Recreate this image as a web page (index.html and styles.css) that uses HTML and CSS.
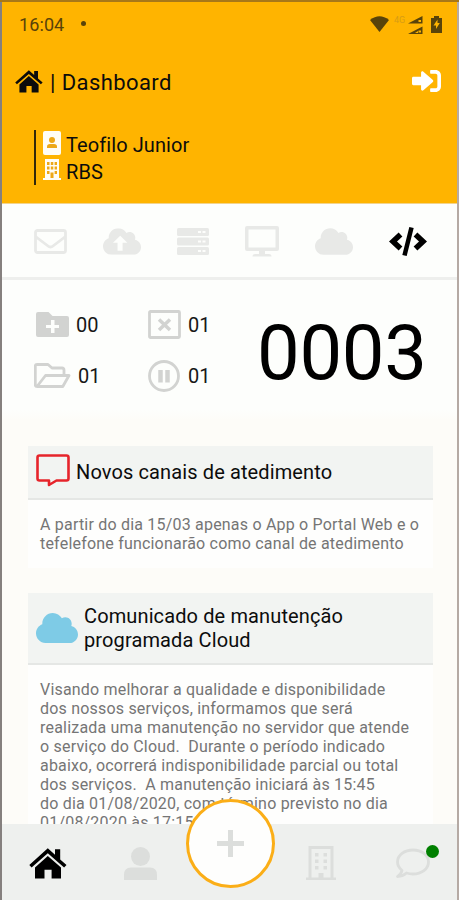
FILE: index.html
```html
<!DOCTYPE html>
<html lang="pt-BR">
<head>
<meta charset="utf-8">
<title>Dashboard</title>
<link rel="stylesheet" href="styles.css">
</head>
<body>
<svg class="defs" width="0" height="0">
  <symbol id="home" viewBox="0 0 38 31"><path d="M18.8 0.3 26 6.7V1.2h5.2v10.200L37.500 17l-2.400 2.400L18.800 5.300 2.600 19.400.300 17z"/><path d="M18.800 8 32 19.500V30.500H22.600V21.700H15.500V30.500H6V19.500z"/></symbol>
  <symbol id="cloud" viewBox="0 32 640 448"><path d="M537.6 226.6c4.1-10.7 6.4-22.4 6.4-34.6 0-53-43-96-96-96-19.700 0-38.100 6-53.300 16.200C367 64.200 315.300 32 256 32c-88.400 0-160 71.600-160 160 0 2.700.1 5.400.2 8.100C40.200 219.800 0 273.200 0 336c0 79.500 64.500 144 144 144h368c70.700 0 128-57.300 128-128 0-61.900-44-113.600-102.400-125.400z"/></symbol>
  <symbol id="building" viewBox="0 0 30 34"><path fill-rule="evenodd" d="M2.500 0h25v31.500H30V34H0v-2.500h2.500zM5.500 3v28.500h7V27h5v4.500h7V3zM9 7h3.500v3.500H9zM17.500 7H21v3.500h-3.500zM9 13.500h3.500V17H9zM17.500 13.500H21V17h-3.500zM9 20h3.500v3.500H9zM17.500 20H21v3.500h-3.500z"/></symbol>
</svg>
<div class="screen">
  <header class="header">
    <div class="status">
      <span class="clock">16:04</span><span class="bullet"></span>
      <svg class="wifi" width="19" height="16" viewBox="0 0 19 16"><path d="M0 4Q9.500-3.500 19 4L9.500 16z"/></svg>
      <span class="net">4G</span>
      <svg class="signal" width="15" height="18" viewBox="0 0 15 18"><path d="M0 7.500 14.500 0v7.500zM0 18l14.500-7.500V18z"/><path class="cut" d="M10.500 4h2.500v2h-2.500zM10.500 14.500h2.500v2h-2.500zM7 17l3-2v2z"/></svg>
      <svg class="battery" width="11" height="17" viewBox="0 0 11 17"><path d="M3 0h5v2h3v15H0V2h3z"/><path class="cut" d="M6.500 3.500 2.500 9.500h2.500V13l3.800-6H6.500z"/></svg>
    </div>
    <div class="titlebar">
      <svg class="logo" width="28" height="23"><use href="#home"/></svg>
      <h1>| <span>Dashboard</span></h1>
      <svg class="signin" width="29" height="22" viewBox="0 64 512 384" preserveAspectRatio="none"><path d="M416 448h-84c-6.600 0-12-5.400-12-12v-40c0-6.600 5.400-12 12-12h84c17.700 0 32-14.300 32-32V160c0-17.700-14.300-32-32-32h-84c-6.600 0-12-5.400-12-12V76c0-6.600 5.400-12 12-12h84c53 0 96 43 96 96v192c0 53-43 96-96 96zm-47-209L201 95c-15-15-41-4.500-41 17v70H24c-13.300 0-24 10.700-24 24v100c0 13.300 10.700 24 24 24h136v70c0 21.500 26 32 41 17l168-144c9.300-9.400 9.300-24.600 0-34z"/></svg>
    </div>
    <div class="profile">
      <div class="who">
        <svg width="18" height="24" viewBox="0 0 18 24"><rect width="18" height="24" rx="2"/><g class="mark"><circle cx="9" cy="9" r="3"/><path d="M4 17v-1.500Q4 13 7 13h4q3 0 3 2.500V17z"/></g></svg>
        <span class="name">Teofilo Junior</span>
      </div>
      <div class="who">
        <svg width="18" height="21" viewBox="0 0 18 21"><path d="M2 0h14v19h2v2H0v-2h2z"/><g class="mark"><path d="M4 3h2.500v3H4zM7.800 3h2.500v3H7.800zM11.600 3h2.400v3h-2.400zM4 7.500h2.500v3H4zM7.800 7.500h2.500v3H7.800zM11.600 7.500h2.400v3h-2.400zM4 12h2.500v3H4zM11.600 12h2.400v3h-2.400zM7.500 13.500h3V19h-3z"/></g></svg>
        <span class="org">RBS</span>
      </div>
    </div>
  </header>

  <nav class="tabs">
    <svg width="33" height="25" viewBox="0 0 33 25" class="line"><rect x="1.500" y="1.500" width="30" height="22" rx="2"/><path d="M1.500 7.500 14 17q2.500 2 5 0L31.500 7.500"/></svg>
    <svg width="38" height="27" viewBox="0 32 640 448"><use href="#cloud" x="0" y="32" width="640" height="448"/><path class="hole" d="M290 160 410 275H330V410H245V275H168z"/></svg>
    <svg width="32" height="27" viewBox="0 0 32 27"><rect width="32" height="8" rx="1.500"/><rect y="9.500" width="32" height="8" rx="1.500"/><rect y="19" width="32" height="8" rx="1.500"/><path class="hole" d="M21 3h3v2h-3zM25.500 3h3v2h-3zM21 12.500h3v2h-3zM25.500 12.500h3v2h-3zM21 22h3v2h-3zM25.500 22h3v2h-3z"/></svg>
    <svg width="34" height="31" viewBox="0 0 34 31"><path fill-rule="evenodd" d="M2 0h30q2 0 2 2v21q0 2-2 2H20v3h4q2.500 0 2.500 2.500h-19Q7.500 28 10 28h4v-3H2q-2 0-2-2V2q0-2 2-2zM3.500 3.500v18h27v-18z"/></svg>
    <svg width="38" height="27"><use href="#cloud"/></svg>
    <svg class="code" width="38" height="31" viewBox="0 0 38 31"><path d="M11.500 8.500 4 15.500 11.500 22.500M26.500 8.500l7.500 7-7.500 7"/><path class="slash" d="M22.500 1.500l-7 28"/></svg>
  </nav>

  <section class="stats">
    <div class="stat a"><svg width="33" height="25" viewBox="0 0 33 25"><path d="M2 0h10.500l4 4H31q2 0 2 2v17q0 2-2 2H2q-2 0-2-2V2q0-2 2-2z"/><path class="hole" d="M15 8h3.500v5H23v3h-4.500v5H15v-5h-5v-3h5z"/></svg><span>00</span></div>
    <div class="stat b"><svg class="line" width="33" height="29" viewBox="0 0 33 29"><rect x="1.500" y="1.500" width="30" height="26" rx="1"/><path class="thick" d="m11 9.500 11 10.500M22 9.500 11 20"/></svg><span>01</span></div>
    <div class="stat c"><svg class="line" width="37" height="25" viewBox="0 0 37 25"><path d="M30 11V7q0-2-2-2H18l-4-3.500H3Q1.300 1.500 1.300 3v19q0 1.500 2 1.500h25.500L35 12.500H11.500L3 23.500"/></svg><span>01</span></div>
    <div class="stat d"><svg class="line" width="32" height="32" viewBox="0 0 32 32"><circle cx="16" cy="16" r="14.500"/><path class="bars" d="M12.500 10v12.500M19.500 10v12.500"/></svg><span>01</span></div>
    <strong class="total">0003</strong>
  </section>

  <main class="feed">
    <article class="card">
      <h2><svg class="bubble" width="34" height="33" viewBox="0 0 34 33"><path d="M3.500 1.500h27q2 0 2 2v21q0 2-2 2H20.500L13 31v-4.500H3.500q-2 0-2-2v-21q0-2 2-2z"/></svg><span class="t1">Novos canais de atedimento</span></h2>
      <p>A partir do dia 15/03 apenas o App o Portal Web e o<br>tefelefone funcionarão como canal de atedimento</p>
    </article>
    <article class="card two">
      <h2><svg class="sky" width="42" height="30" viewBox="0 32 640 448" preserveAspectRatio="none"><use href="#cloud" x="0" y="32" width="640" height="448"/></svg><span class="t2">Comunicado de manutenção<br>programada Cloud</span></h2>
      <p>Visando melhorar a qualidade e disponibilidade<br>dos nossos serviços, informamos que será<br>realizada uma manutenção no servidor que atende<br>o serviço do Cloud.&nbsp; Durante o período indicado<br>abaixo, ocorrerá indisponibilidade parcial ou total<br>dos serviços.&nbsp; A manutenção iniciará às 15:45<br>do dia 01/08/2020, com término previsto no dia<br>01/08/2020 às 17:15</p>
    </article>
  </main>

  <nav class="bottom">
    <svg class="active" width="38" height="31"><use href="#home"/></svg>
    <svg width="33" height="33" viewBox="0 0 33 33"><circle cx="16.500" cy="9.500" r="9.500"/><path d="M0 33V28Q0 20.500 7 20.500H26q7 0 7 7.500v5z"/></svg>
    <button class="fab" aria-label="Novo"><svg width="29" height="29" viewBox="0 0 29 29"><path d="M12 1h5v11h11v5H17v11h-5V17H1v-5h11z"/></svg></button>
    <svg width="30" height="34"><use href="#building"/></svg>
    <span class="chat"><svg class="line" width="34" height="31" viewBox="0 0 34 31"><path d="M6 22.500Q1.500 18.500 1.500 14C1.500 7 8.500 2 17 2s15.500 5 15.500 12S25.500 26 17 26q-3.500 0-6.500-1Q6.500 28.500 1.500 28.500 5.500 25.500 6 22.500z"/></svg><i class="dot"></i></span>
  </nav>
</div>
</body>
</html>
```
FILE: styles.css
```css
* { box-sizing: border-box; margin: 0; padding: 0; }
body {
  width: 459px;
  height: 900px;
  overflow: hidden;
  padding: 2px 2px 0;
  background: linear-gradient(#a87818 0 2px, transparent 2px), linear-gradient(90deg, #85807e 0 2px, #b5aaa4 2px);
  font-family: Roboto, "Liberation Sans", sans-serif;
  color: #0c0c0c;
}
svg { display: block; flex: none; fill: currentColor; }
.defs { position: absolute; }
.screen { width: 455px; height: 898px; display: flex; flex-direction: column; background: #fdfcf8; }
.line { fill: none; stroke: currentColor; stroke-width: 2.8; stroke-linejoin: round; }
.hole { fill: #fdfefc; }

.header { height: 202px; flex: none; background: #ffb400; border-bottom: 1px solid #f3d48c; }
.status { height: 45px; display: flex; align-items: center; padding: 0 14px 0 17px; color: #59430a; }
.clock { font-size: 18px; letter-spacing: 0.1px; }
.bullet { width: 5px; height: 5px; border-radius: 50%; background: currentColor; margin: -2px 0 0 17px; }
.wifi { margin: -2px 0 0 auto; }
.net { width: 13px; margin: -10px 0 0 3px; font-size: 9px; color: #d79d14; }
.signal { margin-left: 1px; }
.battery { margin: -1px 1px 0 8px; }
.wifi { position: relative; left: -2px; }
.cut { fill: #ffb400; }
.titlebar { height: 71px; display: flex; align-items: center; padding: 0 16px 0 13px; }
.logo { margin-top: -2px; }
h1 { font-size: 22px; font-weight: 400; margin-left: 7px; letter-spacing: 0.42px; white-space: nowrap; }
.signin { margin: -4px 0 0 auto; color: #fff; }
.profile { margin: 12px 0 0 32px; height: 55px; border-left: 2px solid #33280a; padding-left: 7px; font-size: 20px; letter-spacing: 0.08px; }
.who { height: 27px; display: flex; align-items: center; gap: 5px; white-space: nowrap; }
.who svg { color: #fffdf5; margin-top: -2px; }
.who span { margin-top: 2px; }
.mark { fill: #eda817; }

.tabs { height: 76px; display: flex; align-items: center; gap: 36px; padding: 2px 0 0 32px; background: #fdfefc; border-bottom: 3px solid #eeefed; color: #e8e9e7; flex: none; }
.code { color: #000; fill: none; stroke: currentColor; stroke-width: 5.5; }
.slash { stroke-width: 4.5; }

.stats { height: 140px; flex: none; display: grid; grid-template: 51px 51px / 112px 106px 1fr; padding: 19px 0 0 34px; background: linear-gradient(#fdfefc 130px, #fdfcf8); }
.stat { display: flex; align-items: center; gap: 7px; color: #d2d3d1; }
.stat span { font-size: 20px; color: #171717; }
.b { grid-column: 2; }
.c { grid-column: 1; grid-row: 2; margin-left: -2px; }
.d { grid-column: 2; grid-row: 2; }
.stat.d { gap: 8px; }
.thick { stroke-width: 3.5; }
.bars { stroke-width: 4.5; }
.total { grid-column: 3; grid-row: 1 / 3; font-size: 76px; line-height: 109px; font-weight: 400; letter-spacing: -0.3px; color: #000; margin-left: 3px; }

.feed { flex: 1; min-height: 0; overflow: hidden; padding: 26px 24px 0 26px; }
.card { background: #fefefd; height: 122px; margin-bottom: 25px; }
.card.two { height: 300px; }
h2 { height: 54px; display: flex; align-items: center; padding-left: 8px; gap: 6px; background: #f2f4f2; border-bottom: 2px solid #e5e7e5; font-size: 20px; line-height: 24px; font-weight: 400; letter-spacing: 0.12px; white-space: nowrap; }
.two h2 { height: 72px; }
.bubble { fill: none; stroke: #e6242b; stroke-width: 2.6; stroke-linejoin: round; margin-top: -3px; }
.sky { color: #7ecbe6; }
p { padding: 15px 0 0 12px; font-size: 16px; line-height: 19px; letter-spacing: 0.2px; color: #757575; white-space: nowrap; }

.bottom { position: relative; height: 76px; flex: none; display: flex; align-items: center; background: #eef0ee; color: #dcdedc; padding: 2px 0 0 27px; }
.active { color: #000; margin-right: 57px; }
.fab { position: absolute; left: 184px; top: -25px; width: 89px; height: 89px; border: 3.5px solid #fbae17; border-radius: 50%; background: #fefefd; color: #dcdedc; display: grid; place-items: center; }
.bottom > svg:nth-of-type(3) { margin-left: 149px; }
.chat { position: relative; margin-left: 60px; }
.dot { position: absolute; left: 30px; top: -3px; width: 13px; height: 13px; border-radius: 50%; background: #008000; }
```
